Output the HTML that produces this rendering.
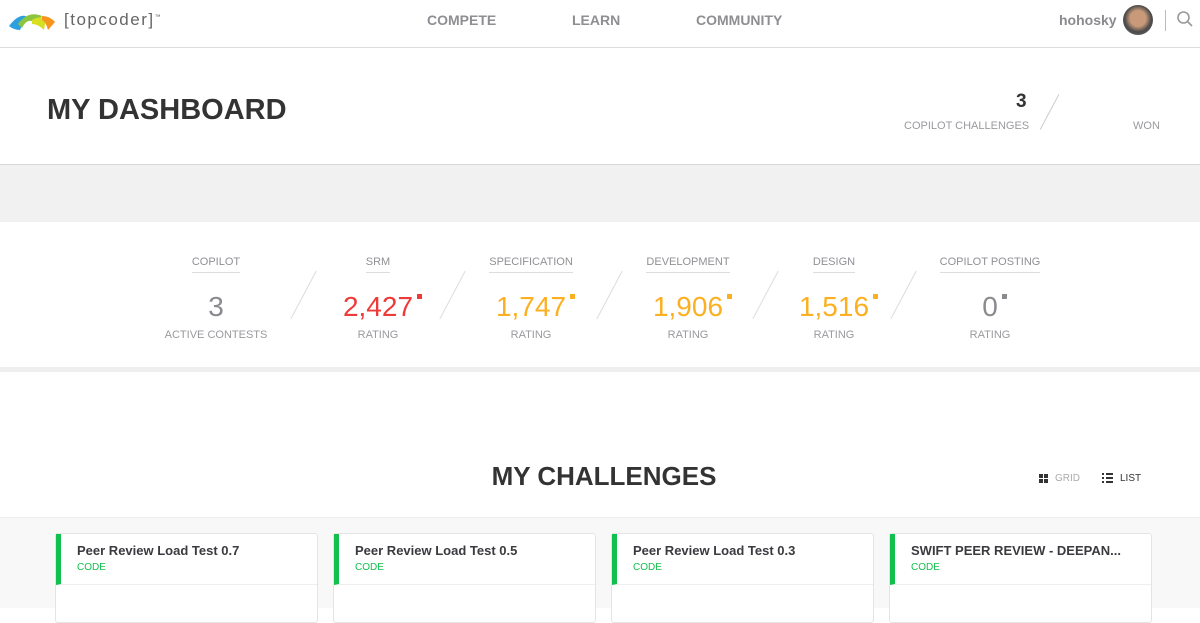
<!DOCTYPE html>
<html><head><style>
*{margin:0;padding:0;box-sizing:border-box}
body{width:1200px;height:608px;overflow:hidden;background:#fff;font-family:"Liberation Sans",sans-serif;position:relative}
.a{position:absolute}
.nav{font-weight:bold;font-size:14px;color:#8e8e93;top:12px}
.lbl{font-size:11px;color:#9a9a9f;text-transform:uppercase}
.col{position:absolute;top:252px;width:160px;text-align:center}
.col .h{display:inline-block;font-size:11px;color:#909095;padding-bottom:4px;border-bottom:1px solid #ddd}
.col .n{font-size:28px;margin-top:18px;height:34px;position:relative;display:inline-block}
.col .n i{position:absolute;right:-9px;top:3px;width:5px;height:5px}
.col .r{font-size:11px;color:#9a9a9f;margin-top:4px}
.sl{position:absolute;top:268px;width:1px;height:54px;background:#ddd;transform:rotate(28deg)}
.card{position:absolute;top:533px;width:263px;height:90px;background:#fff;border:1px solid #e4e4e4;border-radius:3px}
.card .hd{height:51px;border-left:5px solid #13c04d;border-bottom:1px solid #eee;padding:9px 0 0 16px}
.card .t{font-size:13px;color:#3a3a3f;font-weight:bold}
.card .c{font-size:10px;color:#13c04d;margin-top:4px}
</style></head><body>
<svg class="a" style="left:8px;top:10px" width="48" height="22" viewBox="0 0 48 22"><path d="M1 16 Q10 4 18 6 L12 20 Q6 20 1 16Z" fill="#2b9fe0"/><path d="M10 14 Q20 0 34 6 L28 14 Q20 6 14 18Z" fill="#8cc63f"/><path d="M24 10 Q30 6 38 8 L36 20 Q30 14 24 14Z" fill="#d7df23"/><path d="M34 6 Q42 6 47 12 L40 20 Q38 12 34 10Z" fill="#f7941d"/></svg>
<div class="a" style="left:64px;top:10px;font-size:17px;color:#666;letter-spacing:1.5px">[topcoder]<sup style="font-size:6px">™</sup></div>
<div class="a nav" style="left:427px">COMPETE</div>
<div class="a nav" style="left:572px">LEARN</div>
<div class="a nav" style="left:696px">COMMUNITY</div>
<div class="a" style="left:1059px;top:12px;font-weight:bold;font-size:14px;color:#8a8a8f">hohosky</div>
<div class="a" style="left:1123px;top:5px;width:30px;height:30px;border-radius:50%;background:radial-gradient(circle at 50% 45%,#c99a7a 0 35%,#4a4a4a 60%,#777)"></div>
<div class="a" style="left:1165px;top:10px;width:1px;height:21px;background:#bbb"></div>
<svg class="a" style="left:1176px;top:10px" width="18" height="18"><circle cx="7.5" cy="7.5" r="5.5" fill="none" stroke="#999" stroke-width="1.6"/><line x1="11.5" y1="11.5" x2="16" y2="16" stroke="#999" stroke-width="1.6"/></svg>
<div class="a" style="left:0;top:47px;width:1200px;height:1px;background:#ddd"></div>
<div class="a" style="left:47px;top:94px;font-size:29px;font-weight:bold;color:#333">MY DASHBOARD</div>
<div class="a" style="left:1016px;top:91px;font-size:19px;font-weight:bold;color:#333">3</div>
<div class="a lbl" style="left:904px;top:120px">COPILOT CHALLENGES</div>
<div class="a" style="left:1049px;top:92px;width:1px;height:40px;background:#ccc;transform:rotate(28deg)"></div>
<div class="a lbl" style="left:1133px;top:120px">WON</div>
<div class="a" style="left:0;top:164px;width:1200px;height:58px;background:#f0f1f0;border-top:1px solid #d8d8d8"></div>
<div class="col" style="left:136px"><span class="h">COPILOT</span><br><span class="n" style="color:#8a8a8f">3</span><div class="r">ACTIVE CONTESTS</div></div>
<div class="col" style="left:298px"><span class="h">SRM</span><br><span class="n" style="color:#ef3a3a">2,427<i style="background:#ef3a3a"></i></span><div class="r">RATING</div></div>
<div class="col" style="left:451px"><span class="h">SPECIFICATION</span><br><span class="n" style="color:#fcb021">1,747<i style="background:#fcb021"></i></span><div class="r">RATING</div></div>
<div class="col" style="left:608px"><span class="h">DEVELOPMENT</span><br><span class="n" style="color:#fcb021">1,906<i style="background:#fcb021"></i></span><div class="r">RATING</div></div>
<div class="col" style="left:754px"><span class="h">DESIGN</span><br><span class="n" style="color:#fcb021">1,516<i style="background:#fcb021"></i></span><div class="r">RATING</div></div>
<div class="col" style="left:910px"><span class="h">COPILOT POSTING</span><br><span class="n" style="color:#8a8a8f">0<i style="background:#8a8a8f"></i></span><div class="r">RATING</div></div>
<div class="sl" style="left:303px"></div><div class="sl" style="left:452px"></div><div class="sl" style="left:609px"></div><div class="sl" style="left:765px"></div><div class="sl" style="left:903px"></div>
<div class="a" style="left:0;top:367px;width:1200px;height:5px;background:#eeefee"></div>
<div class="a" style="left:0;top:461px;width:1208px;text-align:center;font-size:26px;font-weight:bold;color:#333">MY CHALLENGES</div>
<div class="a" style="left:1039px;top:474px;width:4px;height:4px;background:#333;box-shadow:5px 0 #333,0 5px #333,5px 5px #333"></div>
<div class="a" style="left:1055px;top:473px;font-size:10px;color:#aaa">GRID</div>
<div class="a" style="left:1102px;top:473px;width:11px;height:2px;background:#333;box-shadow:0 4px #333,0 8px #333"></div>
<div class="a" style="left:1104px;top:473px;width:2px;height:10px;background:#fff"></div>
<div class="a" style="left:1120px;top:473px;font-size:10px;color:#333">LIST</div>
<div class="a" style="left:0;top:517px;width:1200px;height:91px;background:#f8f8f8;border-top:1px solid #eee"></div>
<div class="card" style="left:55px"><div class="hd"><div class="t">Peer Review Load Test 0.7</div><div class="c">CODE</div></div></div>
<div class="card" style="left:333px"><div class="hd"><div class="t">Peer Review Load Test 0.5</div><div class="c">CODE</div></div></div>
<div class="card" style="left:611px"><div class="hd"><div class="t">Peer Review Load Test 0.3</div><div class="c">CODE</div></div></div>
<div class="card" style="left:889px"><div class="hd"><div class="t">SWIFT PEER REVIEW - DEEPAN...</div><div class="c">CODE</div></div></div>
</body></html>
